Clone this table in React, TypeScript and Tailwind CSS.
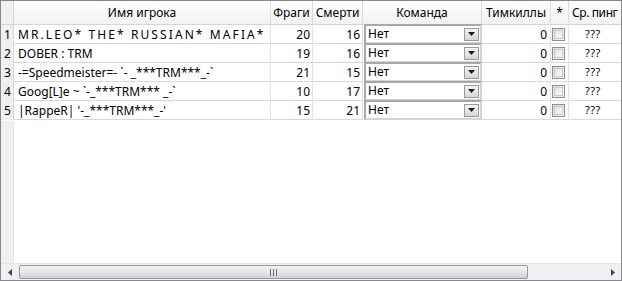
import React from 'react';

interface Player {
  name: string;
  frags: number;
  deaths: number;
  team: string;
  teamkills: number;
  ping: string;
  wide?: boolean;
}

const players: Player[] = [
  { name: 'MR.LEO* THE* RUSSIAN* MAFIA*', frags: 20, deaths: 16, team: 'Нет', teamkills: 0, ping: '???', wide: true },
  { name: 'DOBER : TRM', frags: 19, deaths: 16, team: 'Нет', teamkills: 0, ping: '???' },
  { name: '-=Speedmeister=- `- _***TRM***_-`', frags: 21, deaths: 15, team: 'Нет', teamkills: 0, ping: '???' },
  { name: 'Goog[L]e ~ `-_***TRM*** _-`', frags: 10, deaths: 17, team: 'Нет', teamkills: 0, ping: '???' },
  { name: "|RappeR| '-_***TRM***_-'", frags: 15, deaths: 21, team: 'Нет', teamkills: 0, ping: '???' },
];

const cols = 'grid grid-cols-[13px_257px_42px_50px_119px_69px_18px_60px]';

const headers = ['Имя игрока', 'Фраги', 'Смерти', 'Команда', 'Тимкиллы', '*'];

const ComboBox: React.FC<{ value: string }> = ({ value }) => (
  <div className="h-[20px] -mt-px flex items-center bg-white border-2 border-t-[#a8a8a8] border-l-[#a8a8a8] border-b-[#d4d4d4] border-r-[#d4d4d4] pl-[2px] pr-[1px]">
    <span className="flex-1 leading-none">{value}</span>
    <div className="w-[15px] h-[13px] flex items-center justify-center bg-gradient-to-b from-[#f4f4f4] to-[#d6d6d6] border border-[#9a9a9a]">
      <svg width="7" height="4" viewBox="0 0 7 4">
        <path d="M0 0h7L3.5 4z" fill="#1a1a1a" />
      </svg>
    </div>
  </div>
);

const Checkbox: React.FC = () => (
  <div className="w-[13px] h-[13px] border border-[#8f8f8f] bg-gradient-to-br from-[#dcdcdc] to-[#f8f8f8] p-px">
    <div className="w-full h-full border border-[#c8c8c8] bg-gradient-to-br from-[#e2e2e2] to-[#fbfbfb]" />
  </div>
);

export default function App() {
  return (
    <div
      className="w-[622px] h-[281px] border border-[#838790] bg-white flex flex-col text-[12px] text-black overflow-hidden"
      style={{ fontFamily: '"Noto Sans", "Open Sans", sans-serif' }}
    >
      <div className="flex-1 relative overflow-hidden">
        <div className={`${cols} h-[24px] bg-gradient-to-b from-[#ffffff] to-[#f1f2f4] border-b border-[#d5d5d5]`}>
          <div className="border-r border-[#d5d5d5] bg-[#f0f0f0]" />
          {headers.map((h) => (
            <div key={h} className="flex items-center justify-center border-r border-[#dcdcdc] whitespace-nowrap">
              {h}
            </div>
          ))}
          <div className="flex items-center pl-[3px] whitespace-nowrap tracking-[-0.4px]">Ср. пинг</div>
        </div>
        {players.map((p, i) => (
          <div key={p.name} className={`${cols} h-[19px] border-b border-[#d8d8d8]`}>
            <div className="bg-[#f0f0f0] border-r border-[#d5d5d5] flex items-center pl-[3px]">{i + 1}</div>
            <div
              className={`flex items-center pl-[4px] whitespace-nowrap overflow-hidden border-r border-[#e2e2e2] ${p.wide ? 'tracking-[2.1px]' : ''}`}
            >
              {p.name}
            </div>
            <div className="flex items-center justify-end pr-[2px] border-r border-[#e2e2e2]">{p.frags}</div>
            <div className="flex items-center justify-end pr-[2px] border-r border-[#e2e2e2]">{p.deaths}</div>
            <div className="pl-px">
              <ComboBox value={p.team} />
            </div>
            <div className="flex items-center justify-end pr-[3px] border-r border-[#e2e2e2]">{p.teamkills}</div>
            <div className="flex items-center pl-px border-r border-[#e2e2e2]">
              <Checkbox />
            </div>
            <div className="flex items-center pl-[16px] text-[11px] tracking-[0.5px]">{p.ping}</div>
          </div>
        ))}
        <div className="absolute left-0 top-[120px] bottom-0 w-[13px] bg-[#f0f0f0] border-r border-[#e0e0e0]" />
      </div>
      <div className="h-[17px] flex items-center bg-[#f0f0f0] border-t border-[#e6e6e6]">
        <div className="w-[17px] h-full flex items-center justify-center">
          <svg width="4" height="7" viewBox="0 0 4 7">
            <path d="M4 0v7L0 3.5z" fill="#444" />
          </svg>
        </div>
        <div className="flex-1 h-full py-px">
          <div className="w-[509px] h-full ml-[1px] rounded-[2px] border border-[#979797] bg-gradient-to-b from-[#f2f2f2] via-[#e6e6e6] to-[#d2d2d2] flex items-center justify-center gap-[2px]">
            <div className="w-px h-[7px] bg-[#6a6a6a]" />
            <div className="w-px h-[7px] bg-[#6a6a6a]" />
            <div className="w-px h-[7px] bg-[#6a6a6a]" />
          </div>
        </div>
        <div className="w-[17px] h-full flex items-center justify-center">
          <svg width="4" height="7" viewBox="0 0 4 7">
            <path d="M0 0v7L4 3.5z" fill="#444" />
          </svg>
        </div>
      </div>
    </div>
  );
}
